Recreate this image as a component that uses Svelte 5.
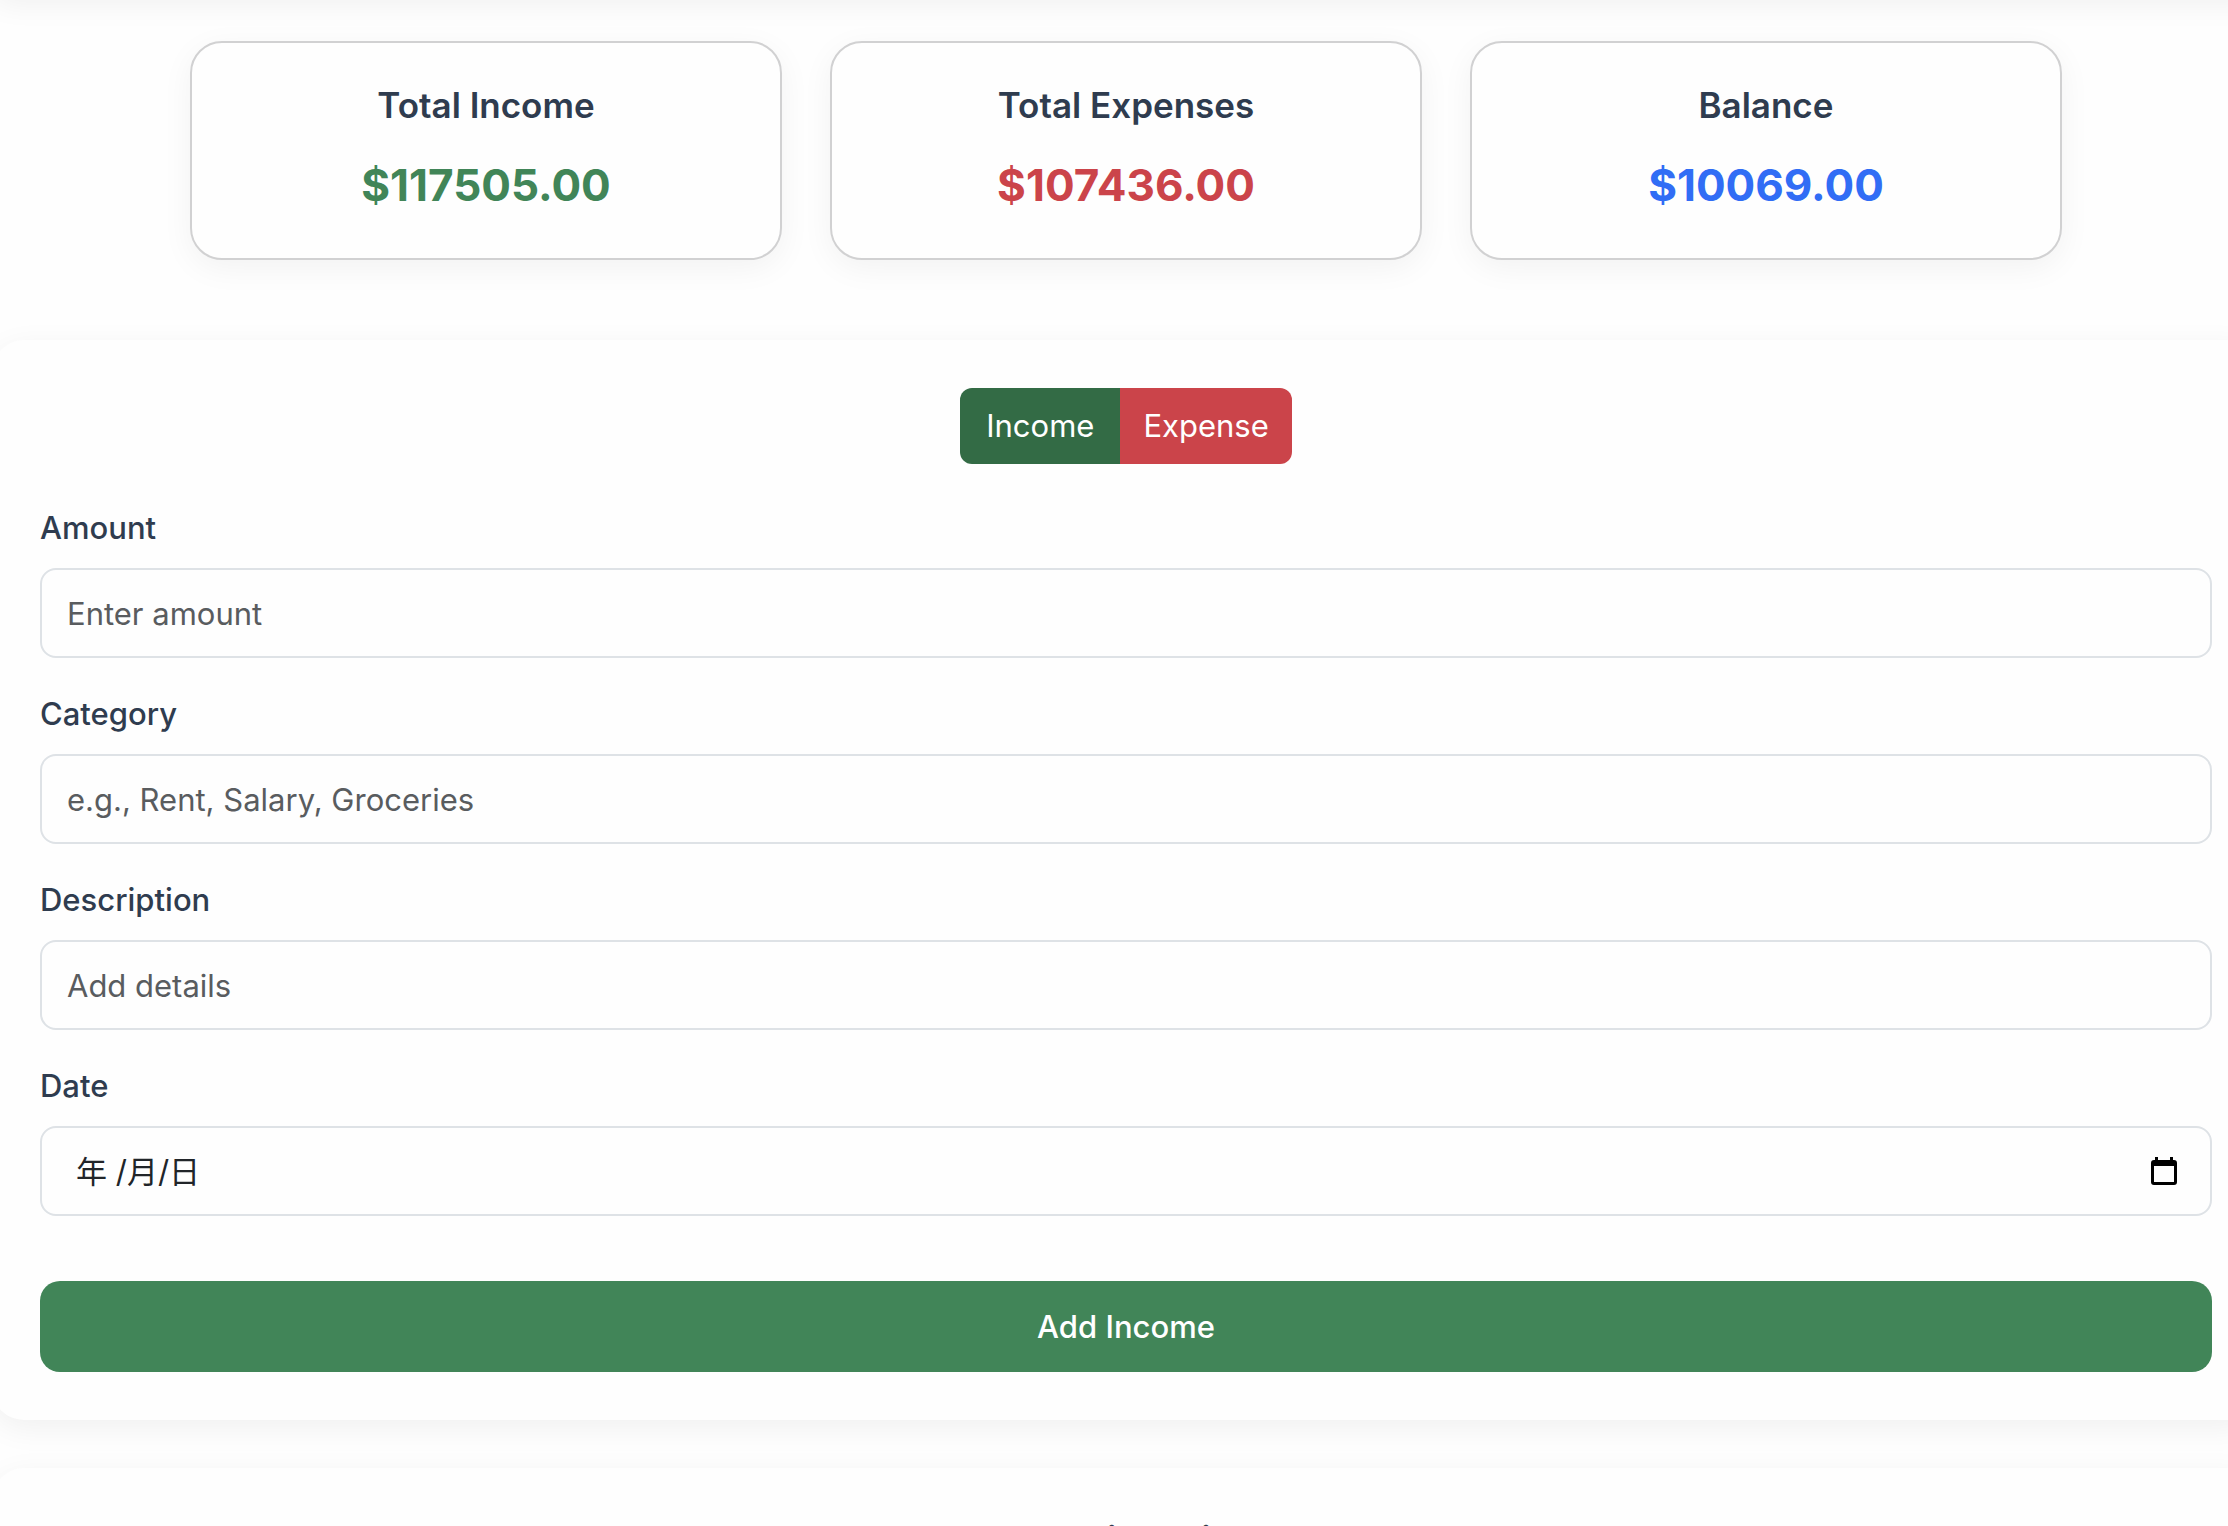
<script>
  const totals = [
    { title: 'Total Income', value: '$117505.00', tone: 'income' },
    { title: 'Total Expenses', value: '$107436.00', tone: 'expense' },
    { title: 'Balance', value: '$10069.00', tone: 'balance' }
  ];
  const fields = [
    { id: 'amount', label: 'Amount', hint: 'Enter amount' },
    { id: 'category', label: 'Category', hint: 'e.g., Rent, Salary, Groceries' },
    { id: 'description', label: 'Description', hint: 'Add details' }
  ];
  let kind = $state('Income');
</script>

<div class="page">
  <header class="topbar"></header>

  <section class="totals">
    {#each totals as t}
      <article class="total">
        <h2>{t.title}</h2>
        <p class={t.tone}>{t.value}</p>
      </article>
    {/each}
  </section>

  <main class="panel">
    <div class="toggle">
      <button type="button" class="pick-income" class:active={kind === 'Income'} onclick={() => (kind = 'Income')}>Income</button>
      <button type="button" class="pick-expense" class:active={kind === 'Expense'} onclick={() => (kind = 'Expense')}>Expense</button>
    </div>

    <form onsubmit={(e) => e.preventDefault()}>
      {#each fields as f}
        <div class="field">
          <label for={f.id}>{f.label}</label>
          <input id={f.id} type="text" placeholder={f.hint} />
        </div>
      {/each}
      <div class="field">
        <label for="date">Date</label>
        <div class="date">
          <input id="date" type="text" placeholder="年 /月/日" />
          <button type="button" aria-label="Open calendar">
            <svg width="26" height="28" viewBox="0 0 26 28">
              <path d="M4 0h3v3h12V0h3v3h1a3 3 0 0 1 3 3v19a3 3 0 0 1-3 3H3a3 3 0 0 1-3-3V6a3 3 0 0 1 3-3h1zM3 9v16h20V9z" fill="#000" fill-rule="evenodd" />
            </svg>
          </button>
        </div>
      </div>
      <button class="submit" type="submit">Add {kind}</button>
    </form>
  </main>

  <section class="panel history">
    <h2>Transaction History</h2>
  </section>
</div>

<style>
  :global(body) {
    background: #fefefe;
  }
  .page {
    font-family: Inter, 'Noto Sans CJK SC', sans-serif;
    color: #2f3c4f;
    font-size: 31px;
    line-height: 48px;
    height: 100vh;
    overflow: hidden;
  }
  .page * {
    box-sizing: border-box;
  }
  button,
  input {
    font: inherit;
    border: 0;
    margin: 0;
  }
  h2,
  p {
    margin: 0;
  }
  .topbar {
    height: 32px;
    margin: -39px -32px 48px -8px;
    border-radius: 32px;
    box-shadow: 0 8px 32px rgba(0, 0, 0, 0.07);
  }
  .totals {
    display: grid;
    grid-template-columns: repeat(3, 1fr);
    gap: 48px;
    margin: 0 166px 80px 190px;
  }
  .total {
    padding: 38px 32px 41px;
    text-align: center;
    background: #fefefe;
    border: 2px solid #d1d1d2;
    border-radius: 32px;
    box-shadow: 0 8px 32px rgba(0, 0, 0, 0.05);
  }
  .total h2 {
    font-size: 35px;
    line-height: 48px;
    font-weight: 600;
    margin-bottom: 24px;
  }
  .total p {
    font-size: 44px;
    line-height: 64px;
    font-weight: 700;
  }
  .income {
    color: #418558;
  }
  .expense {
    color: #cb444a;
  }
  .balance {
    color: #316df5;
  }
  .panel {
    margin: 0 -32px 48px -8px;
    padding: 48px;
    background: #fefefe;
    border-radius: 32px;
    box-shadow: 0 8px 32px rgba(0, 0, 0, 0.06);
  }
  .toggle {
    display: flex;
    justify-content: center;
    margin-bottom: 40px;
  }
  .toggle button {
    height: 76px;
    color: #fff;
  }
  .toggle .pick-income {
    padding: 0 26px;
    background: #418558;
    border-radius: 12px 0 0 12px;
  }
  .toggle .pick-expense {
    padding: 0 23px;
    background: #cb444a;
    border-radius: 0 12px 12px 0;
  }
  .toggle .pick-income.active {
    background: #336b45;
  }
  .toggle .pick-expense.active {
    background: #a2363b;
  }
  .field {
    display: flex;
    flex-direction: column;
    gap: 16px;
    margin-bottom: 32px;
  }
  label {
    font-weight: 500;
  }
  .field input {
    width: 100%;
    height: 90px;
    padding: 0 25px;
    background: #fefefe;
    border: 2px solid #dee2e6;
    border-radius: 16px;
    color: #212529;
  }
  .field input::placeholder {
    color: #595c5f;
    opacity: 1;
  }
  .date {
    display: grid;
    align-items: center;
  }
  .date input,
  .date button {
    grid-area: 1 / 1;
  }
  .field .date input {
    padding-left: 34px;
  }
  .field .date input::placeholder {
    color: #212529;
  }
  .date button {
    justify-self: end;
    display: flex;
    padding: 0;
    margin-right: 35px;
    background: none;
  }
  .submit {
    width: 100%;
    height: 91px;
    margin-top: 33px;
    background: #418558;
    color: #fff;
    border-radius: 20px;
    font-weight: 500;
  }
  .history {
    text-align: center;
  }
  .history h2 {
    font-size: 38px;
    line-height: 48px;
    font-weight: 600;
  }
</style>
